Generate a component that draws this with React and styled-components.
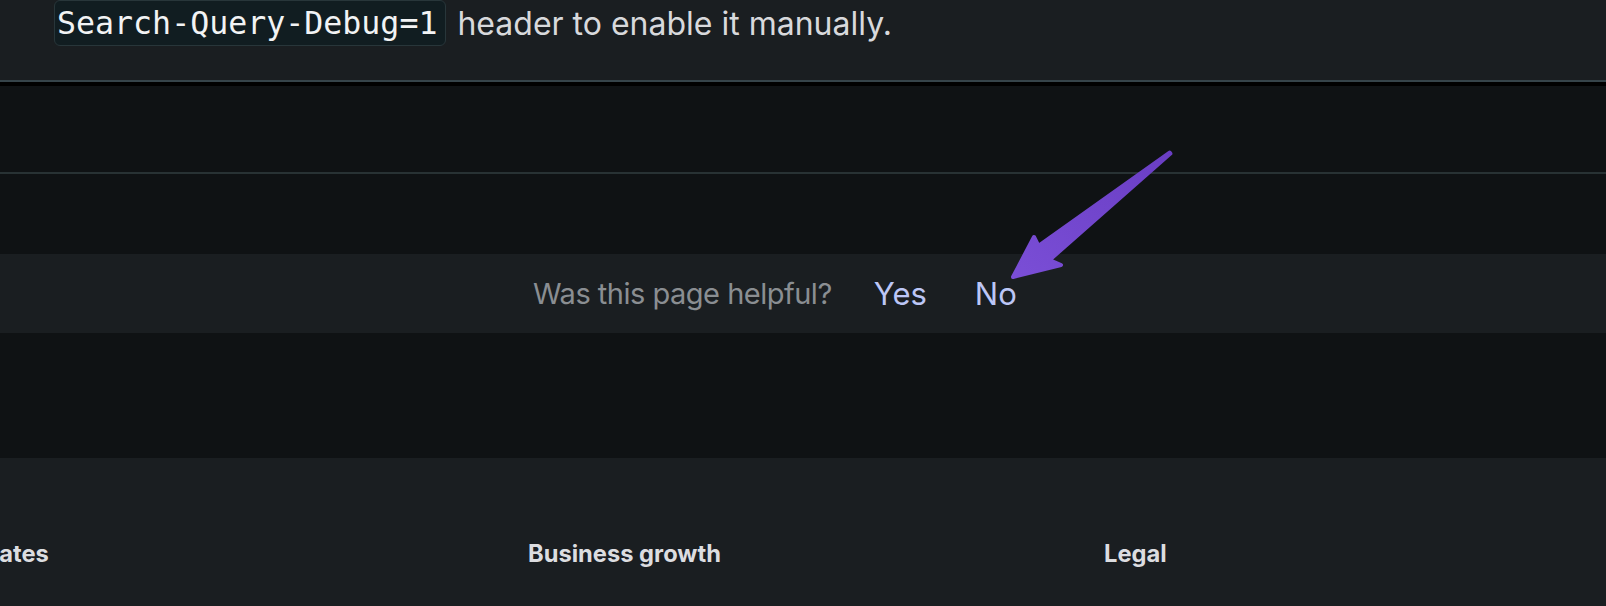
import React from "react"
import styled, { createGlobalStyle } from "styled-components"

const colors = {
  page: "#0f1214",
  panel: "#1a1e21",
  codeBg: "#111d21",
  codeBorder: "#28363a",
  rule: "#36444a",
  divider: "#283234",
  text: "#d8d9dc",
  muted: "#8a8e92",
  link: "#bcc6f6",
  heading: "#dcdde0",
}

const GlobalStyle = createGlobalStyle`
  html, body {
    margin: 0;
    padding: 0;
    background: ${colors.page};
  }
  body {
    font-family: Inter, "Noto Sans", sans-serif;
    overflow: hidden;
  }
`

const Page = styled.div`
  position: relative;
  width: 1606px;
  height: 606px;
  overflow: hidden;
  background: ${colors.page};
`

const DocSection = styled.section`
  height: 80px;
  background: ${colors.panel};
  border-bottom: 2px solid ${colors.rule};
  padding-left: 54px;
  box-sizing: content-box;
`

const Line = styled.p`
  display: flex;
  align-items: center;
  gap: 11px;
  height: 46px;
  margin: 0;
  font-size: 32px;
  color: ${colors.text};
`

const Code = styled.code`
  display: flex;
  align-items: center;
  height: 46px;
  box-sizing: border-box;
  padding: 0 8px 0 2px;
  background: ${colors.codeBg};
  border: 1px solid ${colors.codeBorder};
  border-radius: 6px;
  font-family: "DejaVu Sans Mono", "Liberation Mono", monospace;
  font-size: 31.6px;
  color: #f2f3f4;
`

const Shadow = styled.div`
  height: 4px;
  background: #000;
`

const Spacer = styled.div`
  height: ${p => p.$h}px;
`

const Divider = styled.hr`
  margin: 0;
  border: 0;
  height: 2px;
  background: ${colors.divider};
`

const Feedback = styled.div`
  display: flex;
  align-items: center;
  height: 79px;
  padding-left: 533px;
  background: ${colors.panel};
  font-size: 31px;
`

const Question = styled.span`
  color: ${colors.muted};
  font-size: 29px;
  letter-spacing: -0.5px;
  margin-right: 42px;
`

const Answer = styled.button`
  background: none;
  border: 0;
  padding: 0;
  margin-right: 48px;
  font: inherit;
  color: ${colors.link};
  cursor: pointer;
`

const Footer = styled.footer`
  display: grid;
  grid-template-columns: repeat(3, 576px);
  height: 148px;
  margin-left: -48px;
  padding-top: 82px;
  box-sizing: border-box;
  background: ${colors.panel};
`

const ColumnTitle = styled.h3`
  margin: 0;
  font-size: 23.7px;
  font-weight: 700;
  line-height: 28px;
  color: ${colors.heading};
`

const Pointer = styled.svg`
  position: absolute;
  left: 1000px;
  top: 140px;
`

function Arrow() {
  return (
    <Pointer width="180" height="150" viewBox="0 0 180 150">
      <defs>
        <linearGradient id="arrowFill" x1="0" y1="1" x2="1" y2="0">
          <stop offset="0" stopColor="#7a4ed6" />
          <stop offset="1" stopColor="#6a3ec4" />
        </linearGradient>
      </defs>
      <polygon
        points="13,137 34,97 38.5,106 169.6,12.6 170.4,13.6 49.5,120 61,125"
        fill="url(#arrowFill)"
        stroke="url(#arrowFill)"
        strokeWidth="4"
        strokeLinejoin="round"
      />
    </Pointer>
  )
}

export default function App() {
  return (
    <Page>
      <GlobalStyle />
      <DocSection>
        <Line>
          <Code>Search-Query-Debug=1</Code>
          <span>header to enable it manually.</span>
        </Line>
      </DocSection>
      <Shadow />
      <Spacer $h={86} />
      <Divider />
      <Spacer $h={80} />
      <Feedback>
        <Question>Was this page helpful?</Question>
        <Answer>Yes</Answer>
        <Answer>No</Answer>
      </Feedback>
      <Spacer $h={125} />
      <Footer>
        <ColumnTitle>Updates</ColumnTitle>
        <ColumnTitle>Business growth</ColumnTitle>
        <ColumnTitle>Legal</ColumnTitle>
      </Footer>
      <Arrow />
    </Page>
  )
}
